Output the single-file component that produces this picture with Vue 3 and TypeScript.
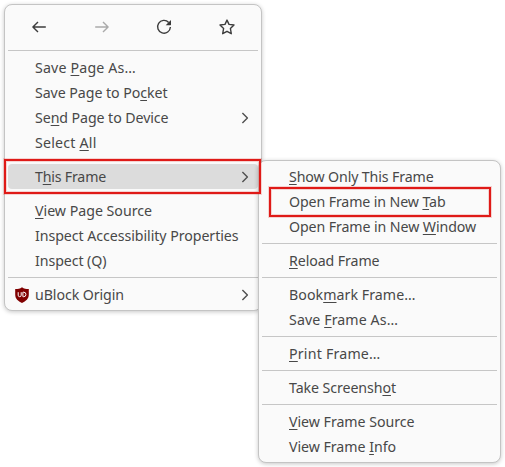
<script setup lang="ts">
import { onMounted, ref } from 'vue'

interface MenuItem {
  label: string
  // index of the access-key letter, -1 when there is none
  key: number
  // advance width of the label in px
  width: number
  submenu?: boolean
  active?: boolean
  badge?: boolean
}

const mainGroups: MenuItem[][] = [
  [
    { label: 'Save Page As…', key: 5, width: 101 },
    { label: 'Save Page to Pocket', key: 15, width: 132.5 },
    { label: 'Send Page to Device', key: 2, width: 133.5, submenu: true },
    { label: 'Select All', key: 7, width: 61.5 },
  ],
  [{ label: 'This Frame', key: 1, width: 71, submenu: true, active: true }],
  [
    { label: 'View Page Source', key: 0, width: 117 },
    { label: 'Inspect Accessibility Properties', key: -1, width: 203.5 },
    { label: 'Inspect (Q)', key: -1, width: 71.5 },
  ],
  [{ label: 'uBlock Origin', key: -1, width: 89, submenu: true, badge: true }],
]

const frameGroups: MenuItem[][] = [
  [
    { label: 'Show Only This Frame', key: 0, width: 144.5 },
    { label: 'Open Frame in New Tab', key: 18, width: 156.5 },
    { label: 'Open Frame in New Window', key: 18, width: 187 },
  ],
  [{ label: 'Reload Frame', key: 0, width: 90.5 }],
  [
    { label: 'Bookmark Frame…', key: 4, width: 126.5 },
    { label: 'Save Frame As…', key: 5, width: 109 },
  ],
  [{ label: 'Print Frame…', key: 0, width: 91.5 }],
  [{ label: 'Take Screenshot', key: 13, width: 107 }],
  [
    { label: 'View Frame Source', key: 0, width: 125.5 },
    { label: 'View Frame Info', key: 11, width: 107 },
  ],
]

const menus = [
  { name: 'main', groups: mainGroups },
  { name: 'frame', groups: frameGroups },
]

const root = ref<HTMLElement | null>(null)
const spacing = ref<Record<string, number>>({})

onMounted(() => {
  const widths = new Map(menus.flatMap(m => m.groups.flat()).map(i => [i.label, i.width]))
  const next: Record<string, number> = {}
  root.value?.querySelectorAll<HTMLElement>('.label').forEach(el => {
    const text = el.textContent ?? ''
    const wanted = widths.get(text)
    if (wanted) next[text] = (wanted - el.getBoundingClientRect().width) / text.length
  })
  spacing.value = next
})
</script>

<template>
  <main ref="root" class="desktop">
    <div v-for="menu in menus" :key="menu.name" class="menu" :class="menu.name">
      <nav v-if="menu.name === 'main'" class="toolbar">
        <svg viewBox="0 0 16 16"><path d="M14.8 8H2M7 2.9 1.9 8 7 13.1" /></svg>
        <svg viewBox="0 0 16 16" class="disabled"><path d="M1.2 8H14M9 2.9 14.1 8 9 13.1" /></svg>
        <svg viewBox="0 0 16 16">
          <path d="M12.7 3.4A6.4 6.4 0 1 0 14.4 8" />
          <path class="solid" d="M15 .9v4.7a.6.6 0 0 1-.6.6H9.7z" />
        </svg>
        <svg viewBox="0 0 16 16">
          <path d="M8 1.1 10 5.4l5 .6-3.6 3.5.9 5.2L8 12.3l-4.3 2.4.9-5.2L1 6l5-.6z" />
        </svg>
      </nav>
      <ul v-for="(group, g) in menu.groups" :key="g" :class="{ divided: g > 0 || menu.name === 'main' }">
        <li v-for="item in group" :key="item.label" :class="{ active: item.active }">
          <span class="gutter">
            <svg v-if="item.badge" class="shield" viewBox="0 0 14 16">
              <path class="plate" d="M7 .2C5 1.8 3 2 .2 2.1v5.5C.2 12 3 14.2 7 15.9c4-1.7 6.8-3.9 6.8-8.3V2.1C11 2 9 1.8 7 .2z" />
              <path class="mark" d="M3.2 5.2v3a1.5 1.5 0 0 0 3 0v-3M7.9 5.2v4.5h.8a2.2 2.2 0 0 0 0-4.5z" />
            </svg>
          </span>
          <span class="label" :style="{ letterSpacing: (spacing[item.label] ?? 0) + 'px' }"><template v-if="item.key < 0">{{ item.label }}</template><template v-else>{{ item.label.slice(0, item.key) }}<u>{{ item.label[item.key] }}</u>{{ item.label.slice(item.key + 1) }}</template></span>
          <svg v-if="item.submenu" class="chevron" viewBox="0 0 8 12"><path d="m1.4 1 5 5-5 5" /></svg>
        </li>
      </ul>
    </div>
    <div class="highlight frame-entry"></div>
    <div class="highlight tab-entry"></div>
  </main>
</template>

<style>
body {
  margin: 0;
  background: #fff;
}
</style>

<style scoped>
.desktop {
  position: relative;
  width: 505px;
  height: 467px;
  overflow: hidden;
  font: 14.2px/25px 'Noto Sans', sans-serif;
  color: #484848;
}
.menu {
  position: absolute;
  box-sizing: border-box;
  padding: 3px;
  border: 1px solid #c4c4c4;
  border-radius: 8px;
  background: #fafafa;
  box-shadow: 0 1px 4px rgba(0, 0, 0, 0.22);
}
.main {
  left: 4px;
  top: 4px;
  width: 258px;
}
.frame {
  left: 258px;
  top: 160px;
  width: 243px;
}
.toolbar {
  display: flex;
  justify-content: space-around;
  align-items: center;
  height: 38px;
}
.toolbar svg {
  width: 16px;
  height: 16px;
}
svg {
  display: block;
  flex: none;
  fill: none;
  stroke: #3c3c3c;
  stroke-width: 1.4;
  stroke-linejoin: round;
}
.toolbar .disabled {
  stroke: #aaa;
}
.solid {
  fill: #383838;
  stroke: none;
}
ul {
  list-style: none;
  margin: 0;
  padding: 0;
}
.divided::before {
  content: '';
  display: block;
  height: 1px;
  margin: 4px 0;
  background: #c6c6c6;
}
li {
  display: flex;
  align-items: center;
  height: 25px;
  border-radius: 4px;
  white-space: nowrap;
}
.active {
  background: #dcdcdc;
}
.gutter {
  width: 20px;
  padding-left: 7px;
  flex: none;
}
.shield {
  width: 14px;
  height: 16px;
}
.plate {
  fill: #800000;
  stroke: none;
}
.mark {
  stroke: #fff;
  stroke-width: 1;
}
u {
  text-decoration: underline 1px;
  text-decoration-skip-ink: none;
  text-underline-offset: 2px;
}
.chevron {
  width: 8px;
  height: 12px;
  margin: 0 9px 0 auto;
  stroke: #505050;
}
.highlight {
  position: absolute;
  box-sizing: border-box;
  border: 2px solid #df1a17;
  box-shadow: 0 0 0 1px rgba(223, 26, 23, 0.18), inset 0 0 0 1px rgba(223, 26, 23, 0.18);
}
.frame-entry {
  left: 4px;
  top: 159px;
  width: 257px;
  height: 35px;
}
.tab-entry {
  left: 269px;
  top: 187px;
  width: 222px;
  height: 30px;
}
</style>
